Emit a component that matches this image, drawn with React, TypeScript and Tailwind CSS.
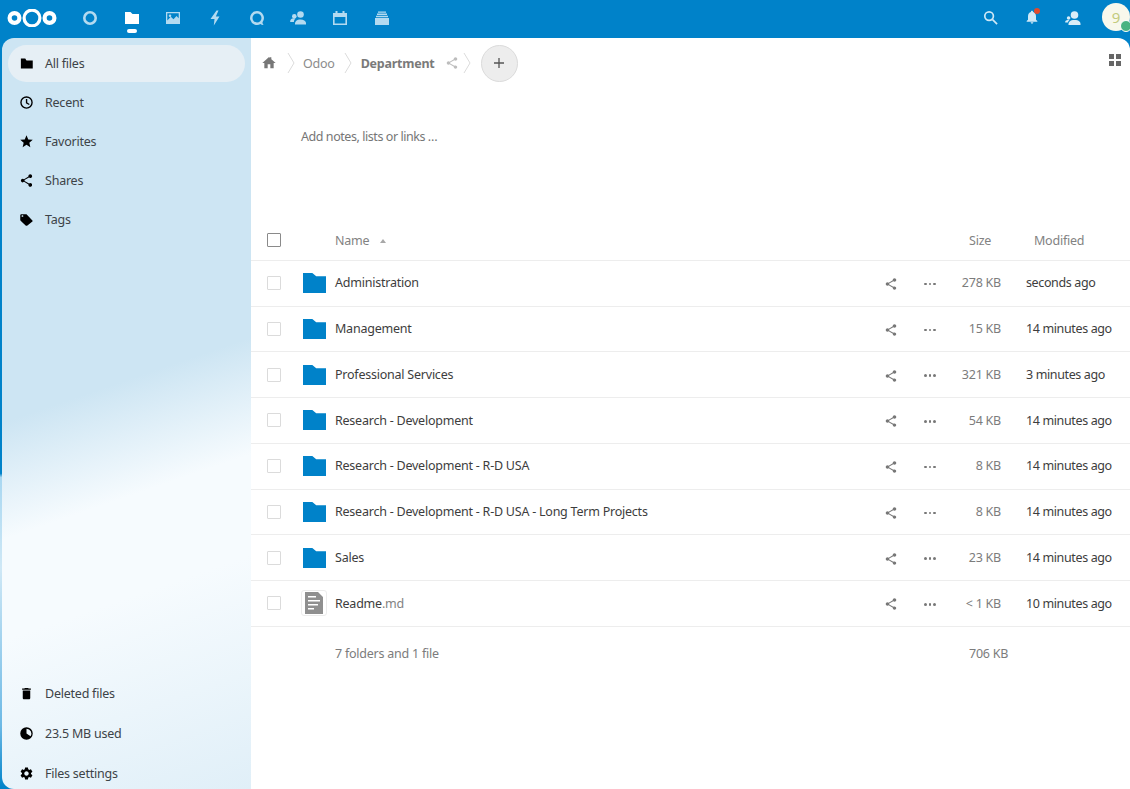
import React from 'react';

const SHARE = 'M18 16.08c-.76 0-1.44.3-1.96.77L8.91 12.7c.05-.23.09-.46.09-.7s-.04-.47-.09-.7l7.05-4.11c.54.5 1.25.81 2.04.81 1.66 0 3-1.34 3-3s-1.34-3-3-3-3 1.34-3 3c0 .24.04.47.09.7L8.04 9.81C7.5 9.31 6.79 9 6 9c-1.66 0-3 1.34-3 3s1.34 3 3 3c.79 0 1.5-.31 2.04-.81l7.12 4.16c-.05.21-.08.43-.08.65 0 1.61 1.31 2.92 2.92 2.92s2.92-1.31 2.92-2.92-1.31-2.92-2.92-2.92z';

const Ico = ({ d, className = 'w-4 h-4' }: { d: string; className?: string }) => (
  <svg viewBox="0 0 24 24" className={className} fill="currentColor">
    <path fillRule="evenodd" d={d} />
  </svg>
);

const Logo = () => (
  <svg viewBox="0 0 50 18" className="w-[50px] h-[18px] mb-[2px]" fill="none" stroke="#fff">
    <circle cx="7.5" cy="9" r="4.9" strokeWidth="4.2" />
    <circle cx="25" cy="9" r="7.9" strokeWidth="3.2" />
    <circle cx="42.500" cy="9" r="4.9" strokeWidth="4.2" />
  </svg>
);

const AppIcon = ({ children, active }: { children: React.ReactNode; active?: boolean }) => (
  <div className={`relative w-[41.7px] h-[38px] flex items-center justify-center ${active ? 'text-white' : 'text-[#b3daf0]'}`}>
    <svg viewBox="0 0 16 16" className="w-4 h-4 mb-[3px]" fill="currentColor">
      {children}
    </svg>
    {active && <div className="absolute left-[16px] top-[29px] w-[10px] h-[4px] rounded-full bg-white" />}
  </div>
);

const navTop = [
  { label: 'All files', active: true, d: 'M10 4H3v16h19V7H12z' },
  { label: 'Recent', d: 'M12 2a10 10 0 1 0 0 20 10 10 0 0 0 0-20zm0 2.2a7.8 7.8 0 1 1 0 15.6 7.8 7.8 0 0 1 0-15.6zM11 6.5V13l5 3 1-1.7-3.8-2.2V6.500z' },
  { label: 'Favorites', d: 'M12 17.27L18.18 21l-1.64-7.03L22 9.24l-7.19-.61L12 2 9.19 8.63 2 9.24l5.46 4.73L5.820 21z' },
  { label: 'Shares', d: SHARE },
  { label: 'Tags', d: 'M21.41 13.6l-9-9.6c-.36-.36-.86-.6-1.41-.6H4c-1.100 0-2 .9-2 2v7c0 .55.22 1.05.59 1.42l8 7.600c.36.36.86.58 1.41.58s1.05-.22 1.41-.59l8-6.400c.78-.4.78-1 0-1.410zM5.500 8C4.67 8 4 7.33 4 6.500S4.670 5 5.500 5 7 5.670 7 6.500 6.330 8 5.500 8z' },
];

const navBottom = [
  { label: 'Deleted files', d: 'M6 19c0 1.1.9 2 2 2h8c1.100 0 2-.9 2-2V7H6v12zM19 4h-3.500l-1-1h-5l-1 1H5v2h14V4z' },
  { label: '23.5 MB used', d: 'M12 2a10 10 0 1 0 0 20 10 10 0 0 0 0-20zm0 2.200V12l6.500 4.300A7.800 7.800 0 0 0 12 4.200z' },
  { label: 'Files settings', d: 'M19.14 12.94c.04-.3.06-.61.06-.94 0-.32-.02-.64-.07-.94l2.03-1.58c.18-.14.23-.41.12-.61l-1.92-3.32c-.12-.22-.37-.29-.59-.22l-2.39.96c-.5-.38-1.03-.7-1.62-.94l-.36-2.54c-.04-.24-.24-.41-.48-.41h-3.84c-.24 0-.43.17-.47.41l-.36 2.54c-.59.24-1.13.57-1.62.94l-2.39-.96c-.22-.08-.47 0-.59.22L2.74 8.870c-.12.21-.08.47.12.61l2.03 1.58c-.05.3-.09.63-.09.94s.02.64.07.94l-2.03 1.58c-.18.14-.23.41-.12.61l1.92 3.32c.12.22.37.29.59.22l2.39-.96c.5.38 1.03.7 1.62.94l.36 2.54c.05.24.24.41.48.41h3.84c.24 0 .44-.17.47-.41l.36-2.54c.59-.24 1.13-.56 1.62-.94l2.39.96c.22.08.47 0 .59-.22l1.92-3.32c.12-.22.07-.47-.12-.61l-2.010-1.58zM12 15.600c-1.980 0-3.600-1.620-3.600-3.600s1.620-3.600 3.600-3.600 3.600 1.620 3.600 3.600-1.620 3.600-3.600 3.600z' },
];

const NavItem = ({ label, d, active }: { label: string; d: string; active?: boolean }) => (
  <div className={`h-[37px] shrink-0 mb-[2px] mx-[6px] rounded-full flex items-center ${active ? 'bg-[#e6eff5]' : ''}`}>
    <div className="w-[37px] flex justify-center text-black">
      <Ico d={d} className="w-[15px] h-[15px]" />
    </div>
    <span className="pt-[2px] text-[12.5px] tracking-[-0.23px] text-[#3d4347]">{label}</span>
  </div>
);

const Chevron = () => (
  <svg viewBox="0 0 8 22" className="w-2 h-[22px] text-[#dcdcdc]" fill="none" stroke="currentColor">
    <path d="M1 1l6 10-6 10" />
  </svg>
);

const files = [
  { name: 'Administration', size: '278 KB', modified: 'seconds ago' },
  { name: 'Management', size: '15 KB', modified: '14 minutes ago' },
  { name: 'Professional Services', size: '321 KB', modified: '3 minutes ago' },
  { name: 'Research - Development', size: '54 KB', modified: '14 minutes ago' },
  { name: 'Research - Development - R-D USA', size: '8 KB', modified: '14 minutes ago' },
  { name: 'Research - Development - R-D USA - Long Term Projects', size: '8 KB', modified: '14 minutes ago' },
  { name: 'Sales', size: '23 KB', modified: '14 minutes ago' },
];

const FolderIcon = () => (
  <svg viewBox="0 0 24 20" preserveAspectRatio="none" className="w-[23.5px] h-5 ml-[1.5px] text-[#0082c9]" fill="currentColor">
    <path d="M0 0h9.500l4 3.200H24V20H0z" />
  </svg>
);

const DocIcon = () => (
  <div className="w-[26px] h-[26px] rounded-[3px] border border-[#ececec] flex items-center justify-center">
    <svg viewBox="0 0 20 24" className="w-5 h-6 text-[#8f8f8f]" fill="currentColor">
      <path fillRule="evenodd" d="M1 1h13l5 5v17H1zM4 5v1.500h8V5zM4 9v1.500h12V9zM4 13v1.500h10V13zM4 17v1.500h6V17z" />
    </svg>
  </div>
);

const Row = ({ icon, name, ext, size, modified }: { icon: React.ReactNode; name: string; ext?: string; size: string; modified: string }) => (
  <div className="h-[45.75px] flex items-center border-b border-[#ededed] text-[12.5px] tracking-[-0.23px]">
    <div className="w-[50px] flex justify-start pl-[16px]">
      <div className="w-[14px] h-[14px] border border-[#dbdbdb] rounded-[1px] bg-white" />
    </div>
    <div className="w-[34px] flex">{icon}</div>
    <div className="flex-1 pt-[1px] text-[#3d3d3d]">
      {name}
      {ext && <span className="text-[#828282]">{ext}</span>}
    </div>
    <div className="w-[13px] text-[#777] mr-[27px]">
      <Ico d={SHARE} className="w-[14px] h-[14px] mt-[2px]" />
    </div>
    <div className="w-[12px] flex gap-[2px] mt-[2px]">
      <div className="w-[2.500px] h-[2.500px] rounded-full bg-[#777]" />
      <div className="w-[2.500px] h-[2.500px] rounded-full bg-[#777]" />
      <div className="w-[2.500px] h-[2.500px] rounded-full bg-[#777]" />
    </div>
    <div className="w-[65px] pt-[1px] text-right text-[#7c7c7c]">{size}</div>
    <div className="w-[129px] pl-[25px] pt-[1px] tracking-[-0.37px] text-[#3d3d3d]">{modified}</div>
  </div>
);

export default function App() {
  return (
    <div className="w-[1130px] h-[789px] overflow-hidden flex flex-col bg-[linear-gradient(180deg,#0082c9_0%,#0082c9_60%,#a8d7f1_60.5%,#cfe8f6_72%,#6db9e5_92%,#0082c9_100%)] font-['Noto_Sans',sans-serif]">
      <header className="h-[38px] shrink-0 flex items-center bg-[#0082c9] pl-[7px]">
        <Logo />
        <div className="flex ml-[12px]">
          <AppIcon>
            <circle cx="8" cy="8" r="5.700" fill="none" stroke="currentColor" strokeWidth="2.600" />
          </AppIcon>
          <AppIcon active>
            <path d="M1 2h5.500l2 2H15v10H1z" />
          </AppIcon>
          <AppIcon>
            <path fillRule="evenodd" d="M1 2h14v12H1zm1.300 1.300v7.200l3.500-3.700 2.700 2.400 3-3.300 2.200 2.300V3.300zM5 4.500a1.300 1.300 0 1 0 0 2.600 1.300 1.300 0 0 0 0-2.600z" />
          </AppIcon>
          <AppIcon>
            <path d="M9.500 0.500L3.500 9h4L6.800 15.500 12.500 6.500H8.800L11.500 0.500z" />
          </AppIcon>
          <AppIcon>
            <path fillRule="evenodd" d="M8 1a7 7 0 1 0 3.500 13.100c.8.800 1.800 1 3.200.900-.8-.800-1.200-1.600-1.200-2.800A7 7 0 0 0 8 1zm0 2.500a4.500 4.500 0 1 1 0 9 4.500 4.500 0 0 1 0-9z" />
          </AppIcon>
          <AppIcon>
            <circle cx="10.500" cy="4.500" r="3.300" />
            <circle cx="4.300" cy="6.300" r="2.300" />
            <path d="M5 14.500c-.2-2.800 1.500-5 5.500-5s6 2 5.500 5zM.2 12c-.3-2 .9-3.700 3.500-3.700.7 0 1.300.1 1.800.4-1 .7-1.500 1.800-1.600 3.300z" />
          </AppIcon>
          <AppIcon>
            <path fillRule="evenodd" d="M1 3h2.500V1h2v2h5V1h2v2H15v12H1zm1.600 4v6.400h10.800V7z" />
          </AppIcon>
          <AppIcon>
            <path d="M1 8h14v7H1zM2 5.700h12v1.500H2zM3 3.500h10V5H3zM4 1.500h8v1.300H4z" />
          </AppIcon>
        </div>
        <div className="flex-1" />
        <div className="flex items-center text-[#cfe8f6]">
          <svg viewBox="0 0 16 16" className="w-[15px] h-[15px] mr-[26px] mb-[4px]" fill="none" stroke="currentColor" strokeWidth="1.800">
            <circle cx="6.500" cy="6.500" r="4.600" />
            <path d="M10 10l5 5" />
          </svg>
          <div className="relative mr-[25px] mb-[4px]">
            <Ico d="M12 22c1.100 0 2-.9 2-2h-4c0 1.100.89 2 2 2zm6-6v-5c0-3.070-1.640-5.640-4.500-6.320V4c0-.83-.67-1.500-1.500-1.500s-1.500.67-1.500 1.500v.68C7.630 5.360 6 7.920 6 11v5l-2 2v1h16v-1l-2-2z" />
            <div className="absolute right-[0px] top-[-1px] w-[6px] h-[6px] rounded-full bg-[#e0492c]" />
          </div>
          <svg viewBox="0 0 16 16" className="w-4 h-4 mr-[21px] mb-[3px] text-[#d9edf8]" fill="currentColor">
            <circle cx="9.500" cy="5" r="3.800" />
            <circle cx="3.600" cy="8" r="1.800" />
            <path d="M3.500 15c-.2-3 1.500-5 6-5s6.500 2 6 5zM.2 12.500C0 11 .8 10 3 10l1.500.3C3.600 11 3 11.700 2.800 12.500z" />
          </svg>
          <div className="relative w-[28px] h-[28px] mb-[4px] rounded-full bg-[#f8f8ec] flex items-center justify-center text-[15px] text-[#c3cb7e]">
            9
            <div className="absolute left-[18px] top-[17px] w-[12px] h-[12px] rounded-full bg-[#49b382] border-[1.500px] border-white" />
          </div>
        </div>
      </header>

      <div className="flex-1 flex min-h-0 pl-[2px]">
        <aside className="w-[249px] shrink-0 rounded-l-[12px] overflow-hidden pt-[7px] flex flex-col bg-[linear-gradient(161deg,#cde5f3_0%,#cde5f3_46%,#f6fbfe_60%,#f6fbfe_72%,#e0eff8_100%)]">
          {navTop.map((item) => (
            <NavItem key={item.label} {...item} />
          ))}
          <div className="h-[434.5px] shrink-0" />
          <div className="flex flex-col gap-[1px] shrink-0">
            {navBottom.map((item) => (
              <NavItem key={item.label} {...item} />
            ))}
          </div>
        </aside>

        <main className="flex-1 min-w-0 bg-white rounded-tr-[12px]">
          <div className="h-[50px] flex items-center pl-[10px] pr-[8px]">
            <Ico d="M10 20v-6h4v6h5v-8h3L15.500 6.500V3.500H13v.9L12 3 2 12h3v8z" className="w-4 h-4 text-[#777]" />
            <div className="ml-[10px] mr-[8px]"><Chevron /></div>
            <span className="pt-[2px] text-[12.5px] tracking-[-0.23px] text-[#8c8c8c]">Odoo</span>
            <div className="ml-[9px] mr-[9px]"><Chevron /></div>
            <span className="pt-[2px] text-[12.5px] tracking-[-0.23px] font-bold text-[#7a7a7a]">Department</span>
            <Ico d={SHARE} className="w-[14px] h-[14px] ml-[10px] text-[#bdbdbd]" />
            <div className="ml-[4px]"><Chevron /></div>
            <div className="ml-[10px] w-[37px] h-[37px] rounded-full bg-[#ededed] border border-[#dbdbdb] flex items-center justify-center">
              <svg viewBox="0 0 12 12" className="w-3 h-3 text-[#555]" fill="none" stroke="currentColor" strokeWidth="1.300">
                <path d="M6 1v10M1 6h10" />
              </svg>
            </div>
            <div className="flex-1" />
            <svg viewBox="0 0 12 12" className="w-3 h-3 mb-[6px] mr-[1px] text-[#666]" fill="currentColor">
              <path d="M0 0h5v5H0zM7 0h5v5H7zM0 7h5v5H0zM7 7h5v5H7z" />
            </svg>
          </div>

          <div className="h-[134px] pl-[50px] pt-[40px] text-[12.5px] tracking-[-0.44px] text-[#767676]">Add notes, lists or links …</div>

          <div className="h-[38.75px] pt-[1px] flex items-center border-b border-[#ededed] text-[12.5px] tracking-[-0.23px] text-[#828282]">
            <div className="w-[50px] pl-[16px]">
              <div className="w-[14px] h-[14px] mb-[2px] border border-[#8a8a8a] rounded-[1px] bg-white" />
            </div>
            <div className="w-[34px]" />
            <div className="flex-1 flex items-center">
              Name
              <div className="ml-[11px] w-0 h-0 border-x-[3.500px] border-x-transparent border-b-[4px] border-b-[#a8a8a8]" />
            </div>
            <div className="w-[65px]">Size</div>
            <div className="w-[96px]">Modified</div>
          </div>

          {files.map((file) => (
            <Row key={file.name} icon={<FolderIcon />} {...file} />
          ))}
          <Row icon={<DocIcon />} name="Readme" ext=".md" size="< 1 KB" modified="10 minutes ago" />

          <div className="h-[54px] pt-[2px] flex items-center text-[12.5px] tracking-[-0.23px] text-[#7c7c7c]">
            <div className="w-[84px]" />
            <div className="flex-1">7 folders and 1 file</div>
            <div className="w-[161px]">706 KB</div>
          </div>
        </main>
      </div>
    </div>
  );
}
